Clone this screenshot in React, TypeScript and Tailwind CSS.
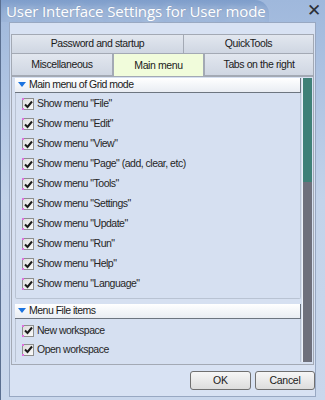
import React from "react";

const font = { fontFamily: '"Liberation Sans", Arial, sans-serif' };

function Check() {
  return (
    <div className="relative w-[12px] h-[12px] border border-[#8e8f8f] bg-gradient-to-br from-[#dcdcdc] to-[#fbfbfb] flex items-center justify-center shrink-0">
      <svg width="9" height="9" viewBox="0 0 9 9">
        <path d="M1 4.5 L3.5 7 L8 1.5" stroke="#1b1b1b" strokeWidth="2" fill="none" />
      </svg>
      <div className="absolute -left-[1px] -top-[1px] w-[2px] h-[2px] bg-[#e070e0]" />
      <div className="absolute -left-[1px] -bottom-[1px] w-[2px] h-[2px] bg-[#e070e0]" />
    </div>
  );
}

function Item({ label, h = "h-[20px]" }: { label: string; h?: string }) {
  return (
    <div className={`${h} flex items-center gap-[3px] pl-[6px]`}>
      <Check />
      <span className="text-[10.5px] tracking-[-0.5px] text-[#262626]">{label}</span>
    </div>
  );
}

function Header({ label }: { label: string }) {
  return (
    <div className="h-[15px] flex items-center gap-[3px] pl-[3px] bg-gradient-to-b from-[#ffffff] to-[#e9edf3] border-b border-r border-[#6d7580] shrink-0">
      <svg width="8" height="6" viewBox="0 0 8 6">
        <path d="M0 0 H8 L4 5 Z" fill="#1b73e0" />
      </svg>
      <span className="text-[10.5px] tracking-[-0.5px] text-[#1a1a1a]">{label}</span>
    </div>
  );
}

export default function App() {
  const group1 = [
    'Show menu "File"',
    'Show menu "Edit"',
    'Show menu "View"',
    'Show menu "Page" (add, clear, etc)',
    'Show menu "Tools"',
    'Show menu "Settings"',
    'Show menu "Update"',
    'Show menu "Run"',
    'Show menu "Help"',
    'Show menu "Language"',
  ];
  const tab = "flex items-center justify-center border-[#a3a9b4] bg-gradient-to-b from-[#e2e7ef] to-[#cfd6e2]";
  return (
    <div
      style={font}
      className="w-[325px] h-[400px] overflow-hidden flex flex-col bg-gradient-to-b from-[#9fb8dc] via-[#c3d3ea] to-[#c9d7ec] border-l border-[#5a6f90]"
    >
      {/* title bar */}
      <div className="h-[22px] relative flex items-center shrink-0">
        <div className="absolute left-0 top-0 w-[268px] h-[22px] rounded-tr-[14px] bg-gradient-to-b from-[#7f9ecb] to-[#9db6da]" />
        <span
          className="relative pl-[5px] text-[15px] text-white leading-none tracking-[-0.1px]"
          style={{ fontFamily: '"Open Sans", "Noto Sans", sans-serif', textShadow: "0 0 6px rgba(255,255,255,0.8), 0 0 2px rgba(60,90,140,0.6)" }}
        >
          User Interface Settings for User mode
        </span>
        <span
          className="absolute left-[306px] top-[2px] text-[17px] text-[#2b2f38] leading-none"
          style={{ fontFamily: '"DejaVu Sans", sans-serif' }}
        >
          ✕
        </span>
      </div>
      {/* client */}
      <div className="flex-1 ml-[8px] mr-[9px] mb-[3px] bg-[#d8e2f3] border border-[#98a8c2] flex flex-col pt-[11px]">
        {/* tabs */}
        <div className="pl-[1px] pr-[1px] flex flex-col text-[10.5px] tracking-[-0.4px] text-[#1a1a1a]">
          <div className="flex h-[20px]">
            <div className={`w-[173px] border ${tab}`}>Password and startup</div>
            <div className={`flex-1 border border-l-0 ${tab}`}>QuickTools</div>
          </div>
          <div className="flex h-[22px] relative">
            <div className={`w-[102px] border border-t-0 ${tab}`}>Miscellaneous</div>
            <div className="w-[91px] -mt-[1px] h-[23px] relative z-10 flex items-start pt-[4px] justify-center border border-b-0 border-[#a3a9b4] bg-[#f1fcdb]">
              Main menu
            </div>
            <div className={`flex-1 border border-t-0 ${tab}`}>Tabs on the right</div>
          </div>
        </div>
        {/* panel */}
        <div className="h-[289px] mx-[1px] border border-[#a3a9b4] bg-[#d6e0f1] flex pl-[3px] pr-[1px] pt-[1px] pb-[2px]">
          <div className="flex-1 flex flex-col overflow-hidden">
            <Header label="Main menu of Grid mode" />
            <div className="border-l border-b border-r border-[#b9c3d3] pt-[1px] pb-[4px] mb-[5px] rounded-b-[2px]">
              {group1.map((l) => (
                <Item key={l} label={l} />
              ))}
            </div>
            <Header label="Menu File items" />
            <div className="border-l border-r border-[#b9c3d3] pt-[2px] flex-1 overflow-hidden">
              <Item label="New workspace" h="h-[19px]" />
              <Item label="Open workspace" h="h-[19px]" />
              <Item label="Save workspace" h="h-[19px]" />
            </div>
          </div>
          {/* scrollbar */}
          <div className="w-[10px] ml-[1px] flex flex-col border-l border-[#eef2f8]">
            <div className="h-[104px] bg-[#3f8077]" />
            <div className="flex-1 bg-[#6e707c]" />
          </div>
        </div>
        {/* buttons */}
        <div className="flex justify-end gap-[4px] pt-[6px]">
          <button className="w-[61px] h-[19px] rounded-[3px] border border-[#707070] bg-gradient-to-b from-[#f6f6f6] to-[#dddddd] text-[10.5px] text-[#1a1a1a]">
            OK
          </button>
          <button className="w-[60px] h-[19px] rounded-[3px] border border-[#707070] bg-gradient-to-b from-[#f6f6f6] to-[#dddddd] text-[10.5px] tracking-[-0.3px] text-[#1a1a1a]">
            Cancel
          </button>
        </div>
      </div>
    </div>
  );
}
